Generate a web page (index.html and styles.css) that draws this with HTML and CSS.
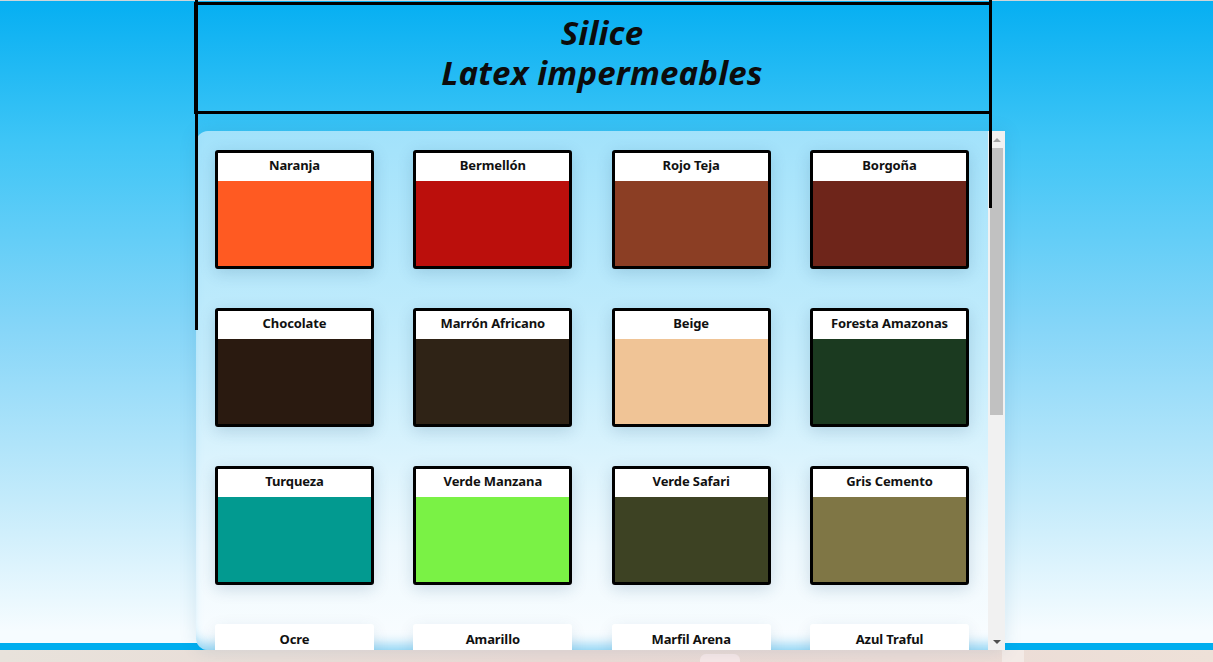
FILE: index.html
```html
<!DOCTYPE html>
<html lang="es">
<head>
<meta charset="utf-8">
<title>Silice - Latex impermeables</title>
<link rel="stylesheet" href="styles.css">
</head>
<body>
<section class="hero">
  <div class="wrap">
    <header class="title-box">
      <h1 class="title">Silice<br>Latex impermeables</h1>
    </header>
    <div class="panel">
      <div class="grid">
        <div class="card"><div class="card-name">Naranja</div><div class="swatch" style="background:#ff5a22"></div></div>
        <div class="card"><div class="card-name">Bermellón</div><div class="swatch" style="background:#bb0f0c"></div></div>
        <div class="card"><div class="card-name">Rojo Teja</div><div class="swatch" style="background:#8b3e24"></div></div>
        <div class="card"><div class="card-name">Borgoña</div><div class="swatch" style="background:#6e251a"></div></div>
        <div class="card"><div class="card-name">Chocolate</div><div class="swatch" style="background:#2a1a10"></div></div>
        <div class="card"><div class="card-name">Marrón Africano</div><div class="swatch" style="background:#2f2316"></div></div>
        <div class="card"><div class="card-name">Beige</div><div class="swatch" style="background:#f0c496"></div></div>
        <div class="card"><div class="card-name">Foresta Amazonas</div><div class="swatch" style="background:#1b3a20"></div></div>
        <div class="card"><div class="card-name">Turqueza</div><div class="swatch" style="background:#029a90"></div></div>
        <div class="card"><div class="card-name">Verde Manzana</div><div class="swatch" style="background:#7af245"></div></div>
        <div class="card"><div class="card-name">Verde Safari</div><div class="swatch" style="background:#3d4223"></div></div>
        <div class="card"><div class="card-name">Gris Cemento</div><div class="swatch" style="background:#7f7645"></div></div>
        <div class="card card-pending"><div class="card-name">Ocre</div><div class="swatch" style="background:#c8901e"></div></div>
        <div class="card card-pending"><div class="card-name">Amarillo</div><div class="swatch" style="background:#f5d000"></div></div>
        <div class="card card-pending"><div class="card-name">Marfil Arena</div><div class="swatch" style="background:#e8d9b0"></div></div>
        <div class="card card-pending"><div class="card-name">Azul Traful</div><div class="swatch" style="background:#1b6fa8"></div></div>
      </div>
      <div class="scrollbar">
        <div class="sb-btn"><span class="sb-arrow sb-up"></span></div>
        <div class="sb-track"><div class="sb-thumb"></div></div>
        <div class="sb-btn"><span class="sb-arrow sb-down"></span></div>
      </div>
    </div>
  </div>
</section>
<footer class="next">
  <div class="next-spacer-a"></div>
  <div class="next-chip"></div>
  <div class="next-spacer-b"></div>
  <div class="next-edge"></div>
</footer>
</body>
</html>
```
FILE: styles.css
```css
* { box-sizing: border-box; }

html, body {
  margin: 0;
  padding: 0;
  height: 662px;
  overflow: hidden;
}

body {
  font-family: "Noto Sans", "DejaVu Sans", sans-serif;
  color: #111;
  background: #e9ddd7;
}

.hero {
  height: 650px;
  border-top: 1px solid #cdd6da;
  border-bottom: 7px solid #00aeef;
  background: linear-gradient(180deg, #06aff2 0px, #3ec5f6 140px, #87d6f8 330px, #c4ebfb 500px, #f6fcff 630px);
}

.wrap {
  position: relative;
  width: 811px;
  margin-left: 194px;
  padding-top: 1px;
}

.wrap::before,
.wrap::after {
  content: "";
  position: absolute;
  top: -1px;
  width: 3px;
  background: #000;
  z-index: 3;
}

.wrap::before {
  left: 1px;
  height: 330px;
}

.wrap::after {
  left: 795px;
  height: 208px;
}

.title-box {
  width: 798px;
  height: 112px;
  border: 3px solid #000;
  padding: 8px 0 0 18px;
  text-align: center;
}

.title {
  margin: 0;
  font-size: 33px;
  line-height: 40px;
  font-weight: 700;
  font-style: italic;
  color: #0c0c0c;
  letter-spacing: 0.2px;
}

.panel {
  margin: 17px 0 0 2px;
  width: 809px;
  height: 519px;
  overflow: hidden;
  display: flex;
  border-radius: 12px 0 0 12px;
  background: linear-gradient(180deg, #a2e2fb 0%, #c6edfc 45%, #eef9fe 80%, #fafdff 100%);
  box-shadow: inset 0 -12px 12px -6px rgba(60, 180, 235, 0.55), 0 0 18px rgba(0, 90, 140, 0.12);
}

.grid {
  flex: 1;
  align-self: flex-start;
  display: grid;
  grid-template-columns: repeat(4, 159px);
  justify-content: space-between;
  row-gap: 39px;
  padding: 19px;
}

.card {
  height: 119px;
  border: 3px solid #000;
  border-radius: 3px;
  background: #fff;
  display: flex;
  flex-direction: column;
  box-shadow: 0 4px 16px rgba(20, 70, 110, 0.18);
}

.card-pending {
  border-color: #fff;
  box-shadow: 0 4px 16px rgba(20, 70, 110, 0.10);
}

.card-name {
  height: 28px;
  flex: none;
  text-align: center;
  font-size: 13px;
  font-weight: 700;
  line-height: 25px;
  color: #111;
  letter-spacing: -0.1px;
}

.swatch {
  flex: 1;
}

.scrollbar {
  width: 17px;
  flex: none;
  display: flex;
  flex-direction: column;
  background: #f1f1f1;
}

.sb-btn {
  height: 17px;
  flex: none;
  display: flex;
  align-items: center;
  justify-content: center;
}

.sb-arrow {
  width: 0;
  height: 0;
  border-left: 4px solid transparent;
  border-right: 4px solid transparent;
}

.sb-up {
  border-bottom: 4px solid #a3a3a3;
}

.sb-down {
  border-top: 4px solid #505050;
}

.sb-track {
  flex: 1;
  padding: 0 2px;
}

.sb-thumb {
  height: 267px;
  background: #c1c1c1;
}

.next {
  height: 12px;
  display: flex;
  background: linear-gradient(90deg, #e8e2db 0%, #eadad5 45%, #ebdbd6 75%, #eee1d8 100%);
}

.next-spacer-a {
  width: 700px;
  flex: none;
}

.next-chip {
  width: 40px;
  flex: none;
  margin-top: 4px;
  border-radius: 6px 6px 0 0;
  background: #f6e7e7;
}

.next-spacer-b {
  width: 262px;
  flex: none;
}

.next-edge {
  width: 22px;
  flex: none;
  background: #f3eae6;
}
```
